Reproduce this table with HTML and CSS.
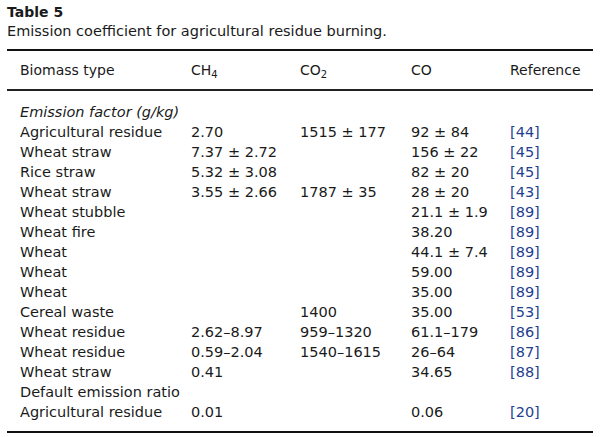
FILE: index.html
```html
<!DOCTYPE html>
<html>
<head>
<meta charset="utf-8">
<link rel="stylesheet" href="styles.css">
</head>
<body>
<div class="page">
  <div class="title">Table 5</div>
  <div class="caption">Emission coefficient for agricultural residue burning.</div>
  <table class="tbl">
    <thead>
      <tr><th>Biomass type</th><th>CH<sub>4</sub></th><th>CO<sub>2</sub></th><th>CO</th><th>Reference</th></tr>
    </thead>
    <tbody>
      <tr class="first"><td class="it">Emission factor (g/kg)</td><td></td><td></td><td></td><td></td></tr>
      <tr><td>Agricultural residue</td><td>2.70</td><td>1515 ± 177</td><td>92 ± 84</td><td class="ref">[44]</td></tr>
      <tr><td>Wheat straw</td><td>7.37 ± 2.72</td><td></td><td>156 ± 22</td><td class="ref">[45]</td></tr>
      <tr><td>Rice straw</td><td>5.32 ± 3.08</td><td></td><td>82 ± 20</td><td class="ref">[45]</td></tr>
      <tr><td>Wheat straw</td><td>3.55 ± 2.66</td><td>1787 ± 35</td><td>28 ± 20</td><td class="ref">[43]</td></tr>
      <tr><td>Wheat stubble</td><td></td><td></td><td>21.1 ± 1.9</td><td class="ref">[89]</td></tr>
      <tr><td>Wheat fire</td><td></td><td></td><td>38.20</td><td class="ref">[89]</td></tr>
      <tr><td>Wheat</td><td></td><td></td><td>44.1 ± 7.4</td><td class="ref">[89]</td></tr>
      <tr><td>Wheat</td><td></td><td></td><td>59.00</td><td class="ref">[89]</td></tr>
      <tr><td>Wheat</td><td></td><td></td><td>35.00</td><td class="ref">[89]</td></tr>
      <tr><td>Cereal waste</td><td></td><td>1400</td><td>35.00</td><td class="ref">[53]</td></tr>
      <tr><td>Wheat residue</td><td>2.62–8.97</td><td>959–1320</td><td>61.1–179</td><td class="ref">[86]</td></tr>
      <tr><td>Wheat residue</td><td>0.59–2.04</td><td>1540–1615</td><td>26–64</td><td class="ref">[87]</td></tr>
      <tr><td>Wheat straw</td><td>0.41</td><td></td><td>34.65</td><td class="ref">[88]</td></tr>
      <tr><td>Default emission ratio</td><td></td><td></td><td></td><td></td></tr>
      <tr class="last"><td>Agricultural residue</td><td>0.01</td><td></td><td>0.06</td><td class="ref">[20]</td></tr>
    </tbody>
  </table>
</div>
</body>
</html>
```
FILE: styles.css
```css
html, body {
  margin: 0;
  padding: 0;
  background: #ffffff;
}
body {
  font-family: "DejaVu Sans", "Open Sans", sans-serif;
  color: #1a1a1a;
  font-size: 14.5px;
}
.page {
  padding: 3px 7px 0 7px;
}
.title {
  font-weight: bold;
  font-size: 14px;
  line-height: 18px;
}
.caption {
  line-height: 20px;
}
.tbl {
  width: 586px;
  margin-top: 8px;
  border-collapse: collapse;
  border-top: 2px solid #111;
  border-bottom: 2px solid #111;
}
.tbl th {
  font-weight: normal;
  font-size: 14px;
  text-align: left;
  height: 38px;
  padding: 0;
  border-bottom: 2px solid #222;
  vertical-align: middle;
}
.tbl th:nth-child(1), .tbl td:nth-child(1) { width: 171px; padding-left: 13px; }
.tbl th:nth-child(2), .tbl td:nth-child(2) { width: 109px; }
.tbl th:nth-child(3), .tbl td:nth-child(3) { width: 111px; }
.tbl th:nth-child(4), .tbl td:nth-child(4) { width: 99px; }
.tbl td {
  padding: 0;
  height: 20px;
  line-height: 20px;
  white-space: nowrap;
}
.tbl sub {
  font-size: 10px;
  vertical-align: -3px;
  line-height: 0;
}
.tbl .first td { padding-top: 11px; }
.tbl .last td { padding-bottom: 9px; }
.it { font-style: italic; }
.ref { color: #1f3f8f; }
```
